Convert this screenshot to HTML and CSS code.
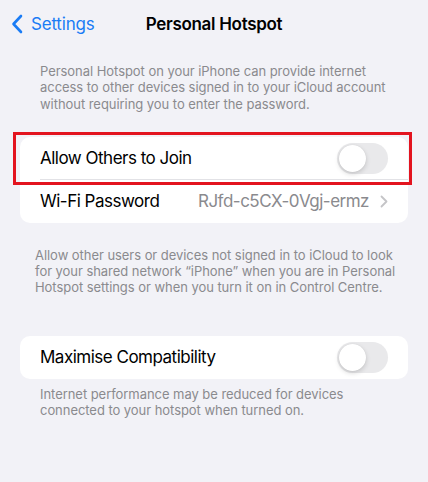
FILE: index.html
```html
<!DOCTYPE html>
<html lang="en">
<head>
<meta charset="utf-8">
<title>Personal Hotspot</title>
<link rel="stylesheet" href="styles.css">
</head>
<body>
<div class="screen">
  <header class="nav">
    <a class="back">
      <svg class="back-chevron" width="12" height="20" viewBox="0 0 12 20"><path d="M10 2 L2.5 10 L10 18" fill="none" stroke="#1a7cf5" stroke-width="2.6" stroke-linecap="round" stroke-linejoin="round"/></svg>
      <span class="back-label">Settings</span>
    </a>
    <h1 class="title">Personal Hotspot</h1>
  </header>

  <p class="note note-top">Personal Hotspot on your iPhone can provide internet access to other devices signed in to your iCloud account without requiring you to enter the password.</p>

  <section class="card card-main">
    <div class="highlight"></div>
    <div class="row row-sep">
      <span class="row-label">Allow Others to Join</span>
      <span class="toggle"><span class="knob"></span></span>
    </div>
    <div class="row">
      <span class="row-label">Wi-Fi Password</span>
      <span class="row-value">RJfd-c5CX-0Vgj-ermz
        <svg class="chev" width="8" height="13" viewBox="0 0 8 13"><path d="M1.5 1.5 L6.5 6.5 L1.5 11.5" fill="none" stroke="#c4c4c7" stroke-width="1.8" stroke-linecap="round" stroke-linejoin="round"/></svg>
      </span>
    </div>
  </section>

  <p class="note note-mid">Allow other users or devices not signed in to iCloud to look for your shared network “iPhone” when you are in Personal Hotspot settings or when you turn it on in Control Centre.</p>

  <section class="card card-compat">
    <div class="row">
      <span class="row-label">Maximise Compatibility</span>
      <span class="toggle"><span class="knob"></span></span>
    </div>
  </section>

  <p class="note note-bottom">Internet performance may be reduced for devices connected to your hotspot when turned on.</p>
</div>
</body>
</html>
```

FILE: styles.css
```css
* { box-sizing: border-box; }
html, body {
  margin: 0;
  padding: 0;
  background: #f2f2f7;
}
body {
  font-family: Inter, "Noto Sans", "Liberation Sans", sans-serif;
  color: #000;
  width: 428px;
  height: 482px;
  overflow: hidden;
}
.screen {
  display: flex;
  flex-direction: column;
}
.nav {
  position: relative;
  height: 48px;
  display: flex;
  align-items: center;
  justify-content: center;
}
.back {
  position: absolute;
  left: 11px;
  top: 14px;
  display: flex;
  align-items: center;
  gap: 8px;
  color: #1a7cf5;
  font-size: 17px;
  letter-spacing: -0.2px;
}
.back-chevron { display: block; }
.title {
  margin: 0;
  font-size: 17px;
  font-weight: 600;
  letter-spacing: -0.3px;
}
.note {
  margin: 0;
  font-size: 13px;
  line-height: 16.3px;
  color: #8a8a8e;
  letter-spacing: -0.05px;
}
.note-top {
  margin-top: 15px;
  padding: 0 40px;
}
.note-mid {
  margin-top: 24px;
  padding: 0 20px 0 35px;
  line-height: 16px;
}
.note-bottom {
  margin-top: 7px;
  padding: 0 40px;
  line-height: 16px;
}
.card {
  position: relative;
  margin: 0 20px;
  background: #fff;
  border-radius: 10px;
}
.card-main { margin-top: 25px; }
.card-compat { margin-top: 41px; }
.highlight {
  position: absolute;
  left: -7px;
  right: -4px;
  top: -5px;
  height: 53px;
  border: 3px solid #e3141f;
  pointer-events: none;
  z-index: 2;
}
.row {
  position: relative;
  height: 43px;
  display: flex;
  align-items: center;
  justify-content: space-between;
  padding: 0 20px;
  font-size: 17px;
  letter-spacing: -0.5px;
}
.row-sep::after {
  content: "";
  position: absolute;
  left: 20px;
  right: 0;
  bottom: 0;
  height: 1px;
  background: #e2e2e6;
}
.row-value {
  display: flex;
  align-items: center;
  gap: 11px;
  color: #8a8a8e;
}
.chev { display: block; }
.toggle {
  position: relative;
  width: 51px;
  height: 31px;
  border-radius: 16px;
  background: #e9e9eb;
}
.knob {
  position: absolute;
  left: 2px;
  top: 2px;
  width: 27px;
  height: 27px;
  border-radius: 50%;
  background: #fff;
  box-shadow: 0 2px 5px rgba(0,0,0,0.16), 0 0 1px rgba(0,0,0,0.1);
}
```
